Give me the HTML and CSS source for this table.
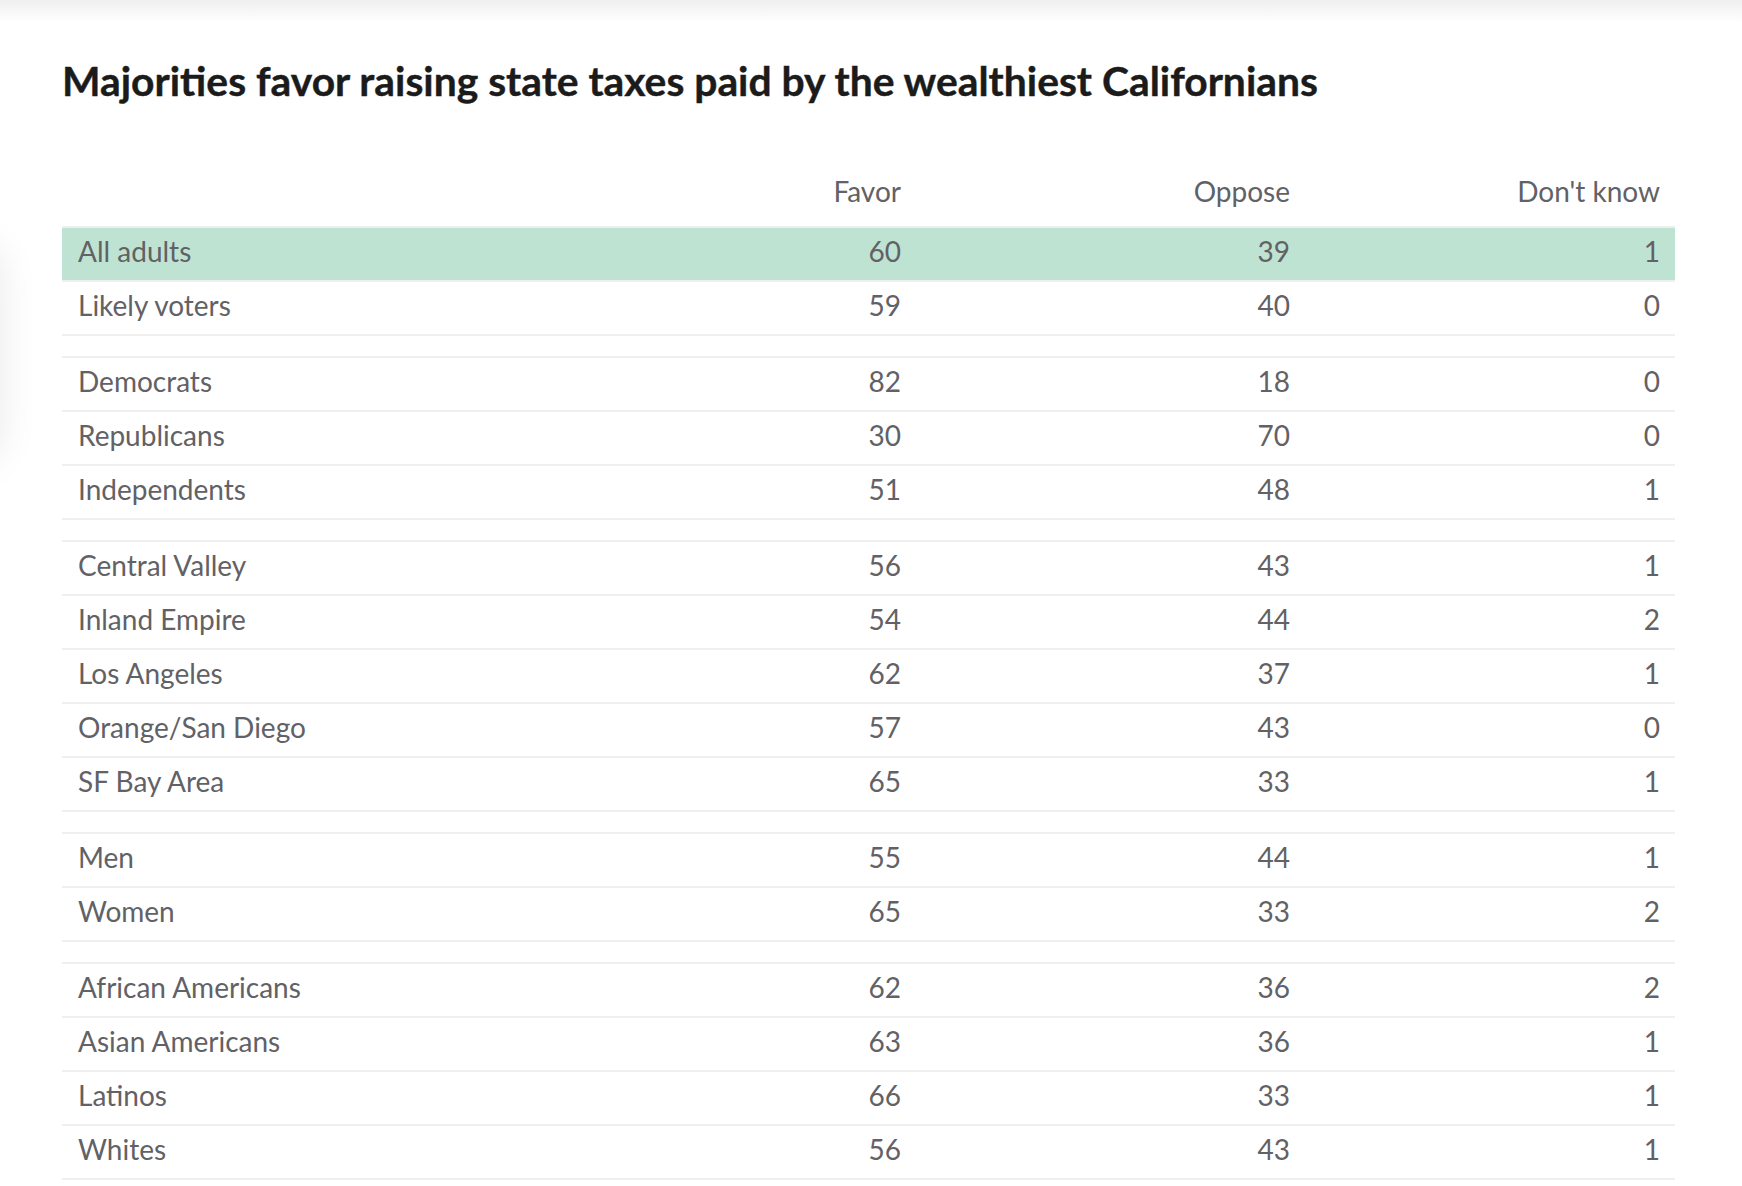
FILE: index.html
```html
<!DOCTYPE html>
<html lang="en">
<head>
<meta charset="utf-8">
<title>Majorities favor raising state taxes</title>
<link rel="stylesheet" href="styles.css">
</head>
<body>
<main class="page">
  <h1 class="title">Majorities favor raising state taxes paid by the wealthiest Californians</h1>
  <div class="table">
    <div class="row head"><span></span><span>Favor</span><span>Oppose</span><span>Don't know</span></div>
    <div class="row highlight"><span>All adults</span><span>60</span><span>39</span><span>1</span></div>
    <div class="row"><span>Likely voters</span><span>59</span><span>40</span><span>0</span></div>
    <div class="spacer"></div>
    <div class="row"><span>Democrats</span><span>82</span><span>18</span><span>0</span></div>
    <div class="row"><span>Republicans</span><span>30</span><span>70</span><span>0</span></div>
    <div class="row"><span>Independents</span><span>51</span><span>48</span><span>1</span></div>
    <div class="spacer"></div>
    <div class="row"><span>Central Valley</span><span>56</span><span>43</span><span>1</span></div>
    <div class="row"><span>Inland Empire</span><span>54</span><span>44</span><span>2</span></div>
    <div class="row"><span>Los Angeles</span><span>62</span><span>37</span><span>1</span></div>
    <div class="row"><span>Orange/San Diego</span><span>57</span><span>43</span><span>0</span></div>
    <div class="row"><span>SF Bay Area</span><span>65</span><span>33</span><span>1</span></div>
    <div class="spacer"></div>
    <div class="row"><span>Men</span><span>55</span><span>44</span><span>1</span></div>
    <div class="row"><span>Women</span><span>65</span><span>33</span><span>2</span></div>
    <div class="spacer"></div>
    <div class="row"><span>African Americans</span><span>62</span><span>36</span><span>2</span></div>
    <div class="row"><span>Asian Americans</span><span>63</span><span>36</span><span>1</span></div>
    <div class="row"><span>Latinos</span><span>66</span><span>33</span><span>1</span></div>
    <div class="row"><span>Whites</span><span>56</span><span>43</span><span>1</span></div>
  </div>
</main>
</body>
</html>
```

FILE: styles.css
```css
html, body {
  margin: 0;
  padding: 0;
  background: #ffffff;
}

body {
  position: relative;
  min-height: 1186px;
  overflow: hidden;
  font-family: "Lato", "Liberation Sans", sans-serif;
}

body::before {
  content: "";
  position: absolute;
  left: 0;
  right: 0;
  top: 0;
  height: 22px;
  background: linear-gradient(#efefef, rgba(255,255,255,0));
}

body::after {
  content: "";
  position: absolute;
  left: -70px;
  top: 240px;
  width: 70px;
  height: 225px;
  border-radius: 40px;
  box-shadow: 0 0 40px rgba(0, 0, 0, 0.09);
}

.page {
  padding: 57px 67px 0 62px;
}

.title {
  margin: 0;
  font-size: 40.8px;
  line-height: 1.2;
  font-weight: 700;
  color: #1b1b1b;
  -webkit-text-stroke: 0.4px #1b1b1b;
}

.table {
  margin-top: 69px;
  font-size: 28px;
  color: #616166;
}

.row {
  display: grid;
  grid-template-columns: 1fr 389px 389px 370px;
  height: 45px;
  padding: 7px 15px 0 16px;
  border-bottom: 2px solid #efefef;
  line-height: 1.2;
}

.row span:not(:first-child) {
  text-align: right;
}

.head {
  height: auto;
  padding-top: 0;
  padding-bottom: 17px;
}

.highlight {
  background: #bfe3d2;
}

.spacer {
  height: 20px;
  border-bottom: 2px solid #efefef;
}
```
